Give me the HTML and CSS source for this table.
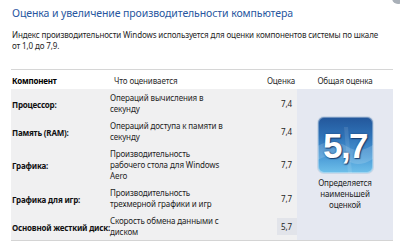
FILE: index.html
```html
<!DOCTYPE html>
<html lang="ru">
<head>
<meta charset="utf-8">
<link rel="stylesheet" href="styles.css">
</head>
<body>
<div class="page">
  <span class="help-dot"></span>
  <h1 class="title">Оценка и увеличение производительности компьютера</h1>
  <p class="intro">Индекс производительности Windows используется для оценки компонентов системы по шкале<br>от 1,0 до 7,9.</p>
  <div class="sep"></div>
  <div class="thead">
    <div class="th th-comp">Компонент</div>
    <div class="th th-desc">Что оценивается</div>
    <div class="th th-score">Оценка</div>
    <div class="th th-total">Общая оценка</div>
  </div>
  <div class="tbody">
    <div class="cell comp r1">Процессор:</div>
    <div class="cell desc r1">Операций вычисления в<br>секунду</div>
    <div class="cell score r1"><span class="num">7,4</span></div>

    <div class="cell comp r2">Память (RAM):</div>
    <div class="cell desc r2">Операций доступа к памяти в<br>секунду</div>
    <div class="cell score r2"><span class="num">7,4</span></div>

    <div class="cell comp r3">Графика:</div>
    <div class="cell desc r3">Производительность<br>рабочего стола для Windows<br>Aero</div>
    <div class="cell score r3"><span class="num">7,7</span></div>

    <div class="cell comp r4">Графика для игр:</div>
    <div class="cell desc r4">Производительность<br>трехмерной графики и игр</div>
    <div class="cell score r4"><span class="num">7,7</span></div>

    <div class="cell comp r5">Основной жесткий диск:</div>
    <div class="cell desc r5">Скорость обмена данными с<br>диском</div>
    <div class="cell score r5"><span class="num num-low">5,7</span></div>

    <div class="total">
      <div class="badge">
        <svg class="flag" viewBox="0 0 55 56" width="55" height="56" aria-hidden="true">
          <path d="M-2 30 C10 22 20 24 30 30 C38 35 46 34 58 26 L58 40 C46 48 38 49 30 44 C20 38 10 36 -2 44 Z" fill="rgba(255,255,255,0.16)"/>
          <path d="M26 10 L30 56 L34 56 L30 10 Z" fill="rgba(255,255,255,0.10)"/>
        </svg>
        <span class="badge-num">5,7</span>
      </div>
      <div class="total-note">Определяется<br>наименьшей<br>оценкой</div>
    </div>
  </div>
</div>
</body>
</html>
```
FILE: styles.css
```css
html, body {
  margin: 0;
  padding: 0;
  background: #ffffff;
}
body {
  font-family: "Noto Sans", "Open Sans", "DejaVu Sans", sans-serif;
  font-size: 8px;
  line-height: 11px;
  letter-spacing: -0.12px;
  color: #1a1a1a;
  width: 400px;
  height: 242px;
  overflow: hidden;
}
.page {
  position: relative;
  padding: 6px 7px 0 11px;
}
.help-dot {
  position: absolute;
  left: 392px;
  top: -8px;
  width: 12px;
  height: 12px;
  border-radius: 50%;
  background: #a9b0b8;
}
.title {
  margin: 0 0 0 1px;
  font-size: 10.5px;
  line-height: 14px;
  letter-spacing: -0.1px;
  font-weight: normal;
  color: #2756a0;
  white-space: nowrap;
}
.intro {
  margin: 9px 0 0 1px;
  color: #1e1e1e;
  white-space: nowrap;
}
.sep {
  margin-top: 18px;
  height: 1px;
  background: #d6d6d6;
}
.thead, .tbody {
  display: grid;
  grid-template-columns: 99px 147px 40px 96px;
}
.thead {
  height: 19px;
  align-items: center;
}
.th {
  padding-top: 1px;
  white-space: nowrap;
}
.th-comp {
  padding-left: 1px;
  font-weight: bold;
  letter-spacing: -0.2px;
  color: #000;
}
.th-desc {
  padding-left: 4px;
  color: #2a2a2a;
}
.th-score {
  text-align: right;
  color: #2a2a2a;
  padding-right: 2px;
}
.th-total {
  text-align: center;
  color: #2a2a2a;
}
.tbody {
  background: #f0f0f1;
  border-bottom: 1px solid #d4d4d4;
  grid-template-rows: 28px 28px 39px 28px 28px;
}
.cell {
  display: flex;
  align-items: center;
}
.comp {
  grid-column: 1;
  padding-left: 1px;
  font-weight: bold;
  color: #111;
  white-space: nowrap;
  letter-spacing: -0.2px;
  padding-top: 2px;
}
.desc {
  grid-column: 2;
  color: #1e1e1e;
  white-space: nowrap;
}
.score {
  grid-column: 3;
  justify-content: flex-end;
}
.r1 { grid-row: 1; }
.r2 { grid-row: 2; }
.r3 { grid-row: 3; }
.r4 { grid-row: 4; }
.r5 { grid-row: 5; }
.num {
  padding: 3px 5px 3px 4px;
  color: #1e1e1e;
}
.num-low {
  background: #e2e4ea;
}
.total {
  grid-column: 4;
  grid-row: 1 / span 5;
  background: #e5e8f1;
  display: flex;
  flex-direction: column;
  align-items: center;
  justify-content: center;
  padding-bottom: 2px;
}
.badge {
  position: relative;
  width: 55px;
  height: 56px;
  box-sizing: border-box;
  border-radius: 6px;
  background: linear-gradient(180deg, #23569a 0%, #2f73b8 35%, #4a9ad6 70%, #6fc0ea 100%);
  box-shadow: inset 0 0 0 1px rgba(255,255,255,0.35), 0 0 0 1px #c9d6e6;
  display: flex;
  align-items: center;
  justify-content: center;
  overflow: hidden;
}
.flag {
  position: absolute;
  left: 0;
  top: 0;
}
.badge-num {
  position: relative;
  font-family: "Liberation Sans", Arial, sans-serif;
  font-weight: bold;
  font-size: 35px;
  line-height: 35px;
  letter-spacing: -1.5px;
  color: #ffffff;
  text-shadow: 0 0 2px #1a3f70, 1px 1px 1px #1a3f70;
  margin-top: 1px;
}
.total-note {
  margin-top: 4px;
  text-align: center;
  color: #1e1e1e;
}
```
